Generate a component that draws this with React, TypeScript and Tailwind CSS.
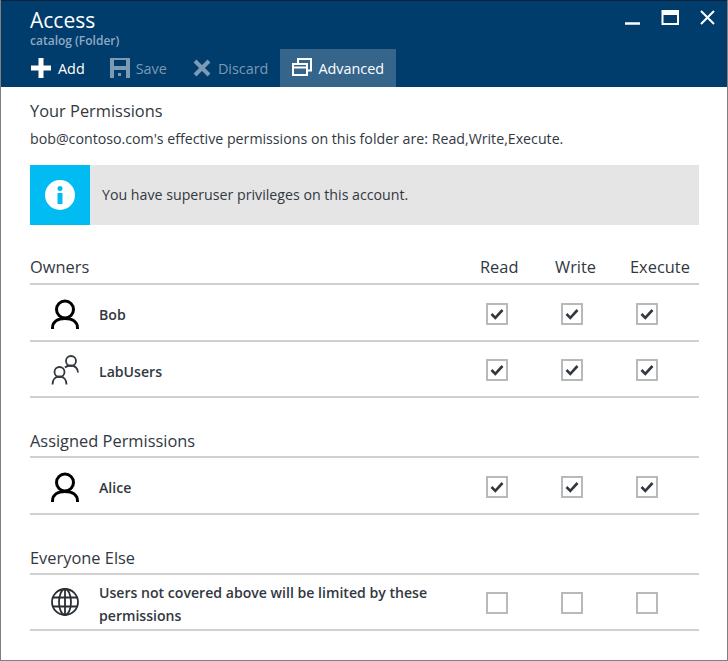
import React from "react";

const font = { fontFamily: '"Open Sans", "Noto Sans", sans-serif' };

function Person() {
  return (
    <svg width="30" height="32" viewBox="0 0 30 32" fill="none" stroke="#000" strokeWidth="3">
      <circle cx="15" cy="12.500" r="8.500" />
      <path d="M2.500 32v-1c0-6 5-9.500 12.500-9.500s12.500 3.500 12.500 9.500v1" />
    </svg>
  );
}
function Group() {
  return (
    <svg width="30" height="32" viewBox="0 0 30 32" fill="none" stroke="#32383f" strokeWidth="1.800">
      <circle cx="9.500" cy="19" r="5" />
      <path d="M2.500 31.500c0-5 3-8 7-8s7 3 7 8" />
      <circle cx="21" cy="8" r="5" />
      <path d="M15 14.500c1.500-1.500 3.500-2 6-2 4 0 7 3 7 7" />
    </svg>
  );
}
function Globe() {
  return (
    <svg width="30" height="30" viewBox="0 0 30 30" fill="none" stroke="#2a2f35" strokeWidth="1.800">
      <circle cx="15" cy="15" r="13" />
      <ellipse cx="15" cy="15" rx="6" ry="13" />
      <path d="M15 2v26M3 10.500h24M3 19.500h24" />
    </svg>
  );
}
function Check({ on }: { on: boolean }) {
  return (
    <div className="ml-[6px] mt-[2px] w-[22px] h-[22px] border-2 border-[#b9b9b9] bg-white flex items-center justify-center">
      {on && (
        <svg width="14" height="12" viewBox="0 0 14 12" fill="none" stroke="#32383f" strokeWidth="2.600">
          <path d="M1.500 6l3.800 3.800L12.500 2" />
        </svg>
      )}
    </div>
  );
}
function Checks({ on }: { on: boolean }) {
  return (
    <div className="flex items-center">
      <div className="w-[75px]"><Check on={on} /></div>
      <div className="w-[75px]"><Check on={on} /></div>
      <div className="w-[69px]"><Check on={on} /></div>
    </div>
  );
}
function Row({ icon, label, on = true, h = "h-[57px]" }: { icon: React.ReactNode; label: React.ReactNode; on?: boolean; h?: string }) {
  return (
    <div className={`flex items-center border-b-2 border-[#d0d0d0] ${h}`}>
      <div className="w-[69px] pl-[20px] flex items-center">{icon}</div>
      <div className="w-[381px] mt-[4px] text-[14.1px] leading-[23px] font-semibold text-[#32383f]">{label}</div>
      <Checks on={on} />
    </div>
  );
}
function Tool({ icon, label, dim, pr, gap }: { icon: React.ReactNode; label: string; dim?: boolean; pr: string; gap: string }) {
  return (
    <div className={`flex items-center h-[38px] ${pr}`}>
      {icon}
      <span className={`text-[14.4px] pt-[2px] ${gap} ${dim ? "text-[#7b9ab3]" : "text-white"}`}>{label}</span>
    </div>
  );
}

export default function App() {
  return (
    <div style={font} className="w-[728px] h-[661px] bg-white border-x border-b border-[#7f7f7f] flex flex-col overflow-hidden">
      <div className="bg-[#003c6c] h-[87px] border-t border-[#0a2238] shrink-0 relative">
        <div className="pl-[29px] pt-[4px] text-[21px] leading-[30px] text-white">Access</div>
        <div className="pl-[29px] text-[12px] leading-[12px] font-semibold text-[#8eaac3]">catalog (Folder)</div>
        <div className="pl-[30px] mt-[2px] flex items-center">
          <Tool
            label="Add"
            pr="pr-[25px]"
            gap="ml-[7px]"
            icon={
              <svg width="20" height="20" viewBox="0 0 20 20" fill="#fff"><path d="M7.500 0h5v7.500H20v5h-7.500V20h-5v-7.500H0v-5h7.500z" /></svg>
            }
          />
          <Tool
            dim
            label="Save"
            pr="pr-[26px]"
            gap="ml-[6px]"
            icon={
              <svg width="20" height="20" viewBox="0 0 20 20" fill="#7b9ab3"><path fillRule="evenodd" d="M0 0h20v20H0zM4 2v6h12V2zM4 12v8h12v-8zM8 15h3v3H8z" /></svg>
            }
          />
          <Tool
            dim
            label="Discard"
            pr="pr-[12px]"
            gap="ml-[7px]"
            icon={
              <svg width="18" height="18" viewBox="0 0 18 18" fill="none" stroke="#7b9ab3" strokeWidth="4"><path d="M2 2l14 14M16 2L2 16" /></svg>
            }
          />
          <div className="bg-[#36658c] px-[12px]">
            <Tool
              label="Advanced"
              pr="pr-0"
              gap="ml-[6px]"
              icon={
                <svg className="-mt-[3px]" width="20" height="18" viewBox="0 0 20 18" fill="none" stroke="#fff" strokeWidth="2"><path d="M6 5V1h13v11.500h-4" /><path d="M1 6h14v11H1zM1 9.500h14" /></svg>
              }
            />
          </div>
        </div>
        <div className="absolute top-[9px] right-0 flex items-start text-white">
          <svg width="100" height="18" viewBox="0 0 100 18" fill="none" stroke="#fff">
            <path d="M0 13.500h15" strokeWidth="2.500" />
            <path d="M37.500 1h15.500v13H37.500z" strokeWidth="2" />
            <path d="M37.500 3.500h15.500" strokeWidth="3" />
            <path d="M76 1l13 13M89 1L76 14" strokeWidth="2" />
          </svg>
          <div className="w-[2px]" />
        </div>
      </div>
      <div className="pl-[29px] pr-[28px] flex-1 text-[#32383f]">
        <div className="pt-[12px] text-[16.4px] leading-[24px]">Your Permissions</div>
        <div className="mt-[6px] text-[14.2px] leading-[20px]">bob@contoso.com's effective permissions on this folder are: Read,Write,Execute.</div>
        <div className="mt-[16px] h-[60px] bg-[#e5e5e5] flex items-center">
          <div className="w-[60px] h-[60px] bg-[#00bcf2] flex items-center justify-center shrink-0">
            <svg width="30" height="30" viewBox="0 0 30 30">
              <circle cx="15" cy="15" r="15" fill="#fff" />
              <circle cx="15" cy="8.500" r="2.500" fill="#00bcf2" />
              <path d="M12.500 13h5v11h-5z" fill="#00bcf2" />
            </svg>
          </div>
          <span className="ml-[12px] text-[14.2px]">You have superuser privileges on this account.</span>
        </div>
        <div className="mt-[29px] h-[31px] pt-[1px] flex items-start justify-between border-b-2 border-[#d0d0d0]">
          <div className="w-[450px] text-[16.4px] leading-[24px]">Owners</div>
          <div className="flex text-[16.4px] leading-[24px]">
            <div className="w-[75px]">Read</div>
            <div className="w-[75px]">Write</div>
            <div className="w-[69px]">Execute</div>
          </div>
        </div>
        <Row icon={<Person />} label="Bob" />
        <Row icon={<Group />} label="LabUsers" h="h-[56px]" />
        <div className="mt-[31px] h-[29px] text-[16.4px] leading-[24px] border-b-2 border-[#d0d0d0]">Assigned Permissions</div>
        <Row icon={<Person />} label="Alice" />
        <div className="mt-[31px] h-[29px] text-[16.4px] leading-[24px] border-b-2 border-[#d0d0d0]">Everyone Else</div>
        <Row icon={<Globe />} on={false} h="h-[56px]" label="Users not covered above will be limited by these permissions" />
      </div>
    </div>
  );
}
